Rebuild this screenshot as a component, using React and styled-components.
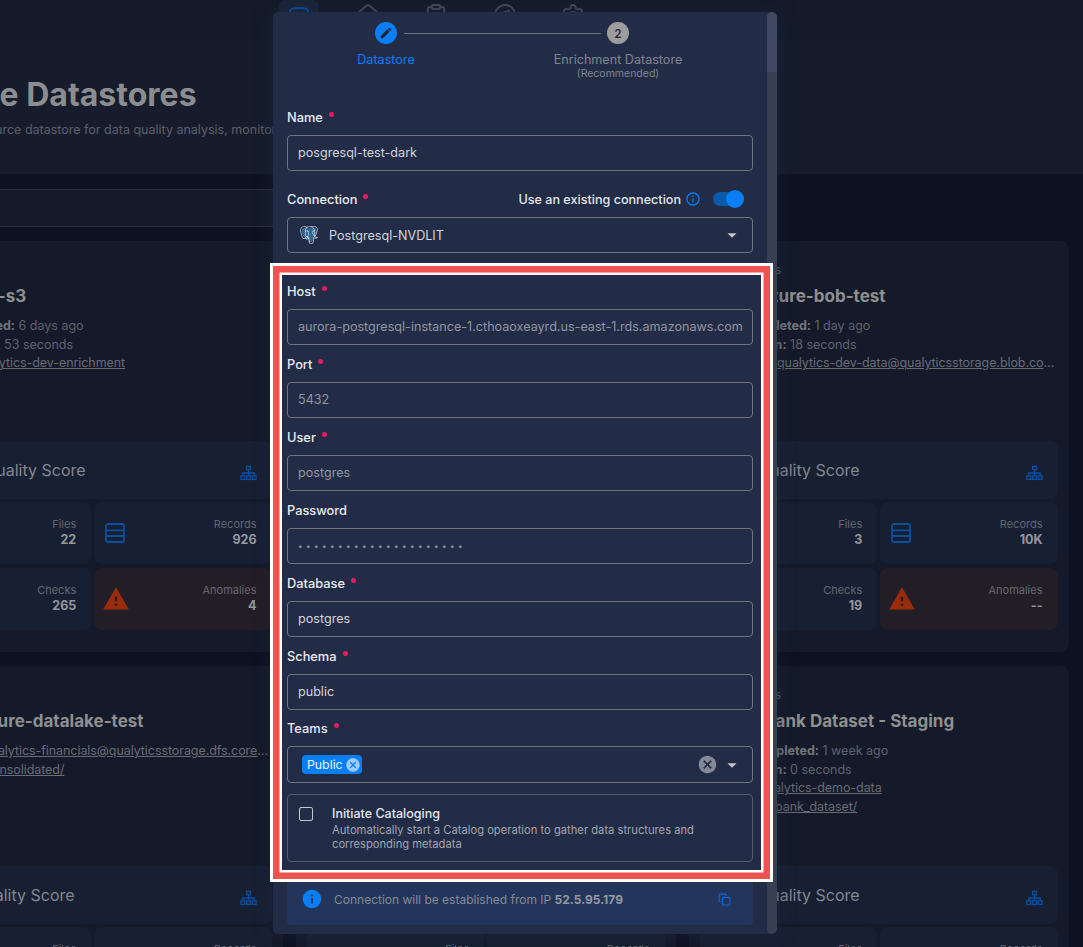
import React from "react";
import styled, { createGlobalStyle } from "styled-components";
import { Database, Home, ClipboardList, Compass, Settings, Copy } from "lucide-react";
import { MdEdit, MdArrowDropDown, MdCancel, MdInfo, MdInfoOutline, MdWarning } from "react-icons/md";
import { SiPostgresql } from "react-icons/si";

const Global = createGlobalStyle`
  html, body { margin: 0; padding: 0; background: #0e1321; }
  body { font-family: Inter, "Noto Sans", "Liberation Sans", sans-serif; }
  * { box-sizing: border-box; }
`;

const Page = styled.div`
  position: relative;
  width: 1083px;
  height: 947px;
  overflow: hidden;
  background: #0d1221;
`;
const TopBand = styled.header`
  height: 174px;
  background: #161c2b;
`;
const Nav = styled.nav`
  height: 40px;
  background: #141a29;
  display: flex;
  gap: 28.5px;
  padding-left: 279px;
`;
const NavItem = styled.div`
  width: 40px;
  height: 40px;
  display: flex;
  justify-content: center;
  padding-top: ${(p) => (p.$active ? "6px" : "3px")};
  border-radius: 6px;
  color: ${(p) => (p.$active ? "#0b4f9f" : "#474c59")};
  background: ${(p) => (p.$active ? "#1a2438" : "transparent")};
`;
const TitleBlock = styled.div`
  margin-left: -92px;
  padding-top: 35px;
`;
const Title = styled.h1`
  margin: 0;
  font-size: 32px;
  line-height: 40px;
  font-weight: 700;
  color: #8c8d90;
  white-space: nowrap;
`;
const Subtitle = styled.p`
  margin: 7px 0 0 9px;
  font-size: 12.5px;
  line-height: 16px;
  color: #5c606a;
  white-space: nowrap;
`;
const Toolbar = styled.div`
  height: 67px;
  padding-top: 15px;
`;
const SearchBox = styled.div`
  width: 500px;
  height: 38px;
  background: #141a29;
  border-top: 1px solid #2a3142;
  border-bottom: 1px solid #2a3142;
  margin-left: -97px;
`;
const Grid = styled.main`
  display: grid;
  grid-template-columns: repeat(3, 379.5px);
  column-gap: 13.5px;
  row-gap: 14px;
  margin-left: -97px;
`;
const Card = styled.article`
  background: #141a29;
  border-radius: 8px;
  padding: 0 11px 22px;
  height: 411px;
`;
const Info = styled.div`
  height: 200px;
  padding-top: 22px;
  overflow: hidden;
`;
const Tag = styled.div`
  font-size: 11px;
  line-height: 14px;
  color: #5c606a;
  padding-left: ${(p) => p.$shift ?? 25}px;
`;
const CardTitle = styled.h2`
  margin: 7px 0 0;
  padding-left: ${(p) => p.$shift}px;
  font-size: 17px;
  line-height: 24px;
  font-weight: 700;
  color: #908f90;
  white-space: nowrap;
`;
const Meta = styled.div`
  margin-top: ${(p) => (p.$first ? "9px" : "0")};
  width: 354px;
  padding-left: ${(p) => p.$shift ?? 30}px;
  font-size: 12.5px;
  line-height: 18.7px;
  color: #5f636d;
  white-space: nowrap;
  overflow: hidden;
  text-overflow: ellipsis;
  b { font-weight: 700; color: #74767c; }
`;
const MetaLink = styled(Meta)`
  width: 357px;
  letter-spacing: -0.07px;
  text-decoration: underline;
  color: #696c75;
`;
const ScoreTile = styled.div`
  height: 58px;
  border-radius: 8px;
  background: #172033;
  display: flex;
  align-items: center;
  justify-content: space-between;
  padding: 0 15px 0 ${(p) => p.$indent}px;
  font-size: 16px;
  color: #84878e;
  white-space: nowrap;
`;
const SitemapIcon = styled.svg`
  width: 17px;
  height: 16px;
  margin-top: 5px;
  color: #0b4f9f;
`;
const TileGrid = styled.div`
  margin-top: 3px;
  display: grid;
  grid-template-columns: 1fr 1fr;
  grid-auto-rows: 62px;
  column-gap: 3px;
  row-gap: 4px;
`;
const Tile = styled.div`
  border-radius: 8px;
  background: ${(p) => (p.$alert ? "#231d26" : "#172033")};
  display: flex;
  align-items: center;
  justify-content: space-between;
  padding: 0 15px 2px ${(p) => (p.$alert ? "8px" : "11px")};
`;
const TileIcon = styled.div`
  display: flex;
  margin-top: 2px;
  color: ${(p) => (p.$alert ? "#9a2c0c" : "#0b4f9f")};
`;
const TileText = styled.div`
  text-align: right;
`;
const TileLabel = styled.div`
  font-size: 11px;
  line-height: 15px;
  color: #63666f;
`;
const TileValue = styled.div`
  font-size: 12.5px;
  line-height: 16px;
  font-weight: 700;
  color: #96979b;
`;

const Modal = styled.section`
  position: absolute;
  left: 273px;
  top: 12px;
  width: 504px;
  height: 922px;
  background: #222c47;
  border-radius: 5px;
  display: flex;
  overflow: hidden;
  box-shadow: 0 0 18px rgba(30, 40, 70, 0.55);
`;
const ModalBody = styled.div`
  width: 494px;
  padding: 0 14px;
`;
const Scrollbar = styled.div`
  width: 10px;
  border-radius: 5px;
  background: #393f52;
  overflow: hidden;
`;
const ScrollThumb = styled.div`
  height: 60px;
  background: #3f4964;
`;
const Stepper = styled.div`
  position: relative;
  height: 81px;
  display: grid;
  grid-template-columns: 198px 232px;
  justify-content: start;
`;
const Step = styled.div`
  display: flex;
  flex-direction: column;
  align-items: center;
  grid-column: ${(p) => p.$col};
  padding-top: 10px;
  width: ${(p) => p.$w}px;
  margin-left: ${(p) => p.$ml}px;
`;
const StepDot = styled.div`
  width: 22px;
  height: 22px;
  border-radius: 50%;
  display: flex;
  align-items: center;
  justify-content: center;
  font-size: 12px;
  font-weight: 500;
  color: #1c2233;
  background: ${(p) => (p.$active ? "#0a7ff5" : "#9d9d9d")};
`;
const StepLine = styled.div`
  position: absolute;
  left: 117px;
  top: 21px;
  width: 197px;
  height: 1px;
  background: #6e7483;
`;
const StepName = styled.div`
  margin-top: 8px;
  font-size: 12.6px;
  line-height: 15px;
  color: ${(p) => (p.$active ? "#0a7ff5" : "#80848f")};
  white-space: nowrap;
`;
const StepNote = styled.div`
  font-size: 10.5px;
  line-height: 13px;
  color: #80848f;
  white-space: nowrap;
`;
const Field = styled.div`
  padding-top: ${(p) => p.$top ?? 9}px;
`;
const LabelRow = styled.div`
  height: 20px;
  margin-bottom: 8px;
  display: flex;
  align-items: center;
  justify-content: space-between;
  padding-right: 10px;
`;
const Label = styled.label`
  display: inline-flex;
  align-items: center;
  font-size: 12.8px;
  font-weight: 500;
  color: #e9ebee;
`;
const Dot = styled.span`
  width: 5px;
  height: 5px;
  border-radius: 50%;
  background: #ea1a62;
  margin: 0 0 5px 6px;
`;
const Input = styled.div`
  height: 36px;
  border: 1px solid #70747f;
  border-radius: 4px;
  display: flex;
  align-items: center;
  padding: 0 10px 1px;
  font-size: 12.6px;
  color: ${(p) => (p.$muted ? "#9296a1" : "#d3d5da")};
  white-space: nowrap;
  overflow: hidden;
`;
const PasswordDots = styled.span`
  font-size: 8px;
  letter-spacing: 3.5px;
`;
const SelectBox = styled(Input)`
  justify-content: space-between;
  padding: 0 9px 0 12px;
`;
const TeamsBox = styled(SelectBox)`
  height: 37px;
  padding: 0 9px 0 14px;
`;
const SelectValue = styled.div`
  display: flex;
  align-items: center;
  gap: 11px;
`;
const ToggleWrap = styled.div`
  display: flex;
  align-items: center;
  gap: 4px;
  font-size: 12.6px;
  font-weight: 500;
  color: #e4e6ea;
`;
const InfoIcon = styled.span`
  display: flex;
  color: #0a7ff5;
`;
const Toggle = styled.div`
  position: relative;
  width: 30px;
  height: 14px;
  margin-left: 8px;
  border-radius: 7px;
  background: #0c5bab;
`;
const Thumb = styled.div`
  position: absolute;
  right: -1px;
  top: -2px;
  width: 18px;
  height: 18px;
  border-radius: 50%;
  background: #0a7ff5;
`;
const Chip = styled.div`
  display: flex;
  align-items: center;
  height: 19px;
  padding: 0 1px 0 5px;
  gap: 2px;
  background: #0a7ff5;
  border-radius: 4px;
  font-size: 12.3px;
  color: #eaf4ff;
`;
const ChipClose = styled.span`
  display: flex;
  color: #9ccbff;
`;
const Actions = styled.div`
  display: flex;
  align-items: center;
  gap: 3px;
  color: #c4c6cc;
`;
const ClearIcon = styled.span`
  display: flex;
  color: #858997;
`;
const CatalogBox = styled.div`
  margin-top: 11px;
  height: 68px;
  border: 1px solid #555b6c;
  border-radius: 4px;
  display: flex;
  padding: 11px 30px 0 11px;
`;
const Checkbox = styled.div`
  width: 14px;
  height: 14px;
  flex: none;
  border: 1px solid #c4c6cb;
  border-radius: 2px;
  margin: 1px 19px 0 0;
`;
const CatalogTitle = styled.div`
  font-size: 12.5px;
  line-height: 15px;
  font-weight: 500;
  color: #e4e6ea;
`;
const CatalogDesc = styled.div`
  margin-top: 2px;
  font-size: 11.2px;
  line-height: 14px;
  color: #a1a5af;
`;
const Notice = styled.div`
  margin-top: 11px;
  height: 52px;
  border-radius: 4px;
  background: #23355a;
  display: flex;
  align-items: center;
  padding: 0 22px 0 14px;
  font-size: 12px;
  color: #858a97;
  b { font-weight: 700; color: #9498a4; }
`;
const NoticeText = styled.div`
  flex: 1;
  margin-left: 11px;
`;
const CopyIcon = styled.span`
  display: flex;
  color: #0a6adb;
`;
const Frame = styled.div`
  position: absolute;
  left: 269.5px;
  top: 262.5px;
  width: 503.5px;
  height: 619px;
  border: 3px solid #fff;
  box-shadow: inset 0 0 0 6.5px #ef5350, inset 0 0 0 9px #fff;
  pointer-events: none;
`;
const LogoBox = styled.span`
  position: relative;
  width: 18px;
  height: 18px;
  display: block;
  color: #e6edf5;
`;
const LogoFill = styled.svg`
  position: absolute;
  inset: 0;
`;
const LogoLine = styled(SiPostgresql)`
  position: absolute;
  inset: 0;
`;

const Sitemap = () => (
  <SitemapIcon viewBox="0 0 18 16" fill="none" stroke="currentColor" strokeWidth="1.4">
    <rect x="7" y="1" width="4" height="3.5" />
    <rect x="1" y="11" width="4" height="3.8" />
    <rect x="7" y="11" width="4" height="3.8" />
    <rect x="13" y="11" width="4" height="3.8" />
    <path d="M9 4.5V11M3 11V8h12v3" />
  </SitemapIcon>
);
const RowsIcon = () => (
  <svg width="20" height="20" viewBox="0 0 20 20" fill="none" stroke="currentColor" strokeWidth="1.8">
    <rect x="1" y="1" width="18" height="18" rx="2" />
    <path d="M1 7.3h18M1 13h18" />
  </svg>
);

const Stats = ({ data }) => (
  <TileGrid>
    <Tile>
      <TileIcon><RowsIcon /></TileIcon>
      <TileText><TileLabel>Files</TileLabel><TileValue>{data.files}</TileValue></TileText>
    </Tile>
    <Tile>
      <TileIcon><RowsIcon /></TileIcon>
      <TileText><TileLabel>Records</TileLabel><TileValue>{data.records}</TileValue></TileText>
    </Tile>
    <Tile>
      <TileIcon><RowsIcon /></TileIcon>
      <TileText><TileLabel>Checks</TileLabel><TileValue>{data.checks}</TileValue></TileText>
    </Tile>
    <Tile $alert>
      <TileIcon $alert><MdWarning size={28} /></TileIcon>
      <TileText><TileLabel>Anomalies</TileLabel><TileValue>{data.anomalies}</TileValue></TileText>
    </Tile>
  </TileGrid>
);

const cards = [
  { title: "qualytics-s3", titleShift: 7, scoreIndent: 70, completed: "6 days ago", duration: "53 seconds", completedShift: 30,
    links: [{ text: "qualytics-dev-enrichment", shift: 60 }], files: 22, records: 926, checks: 265, anomalies: 4 },
  { title: "", titleShift: 0, scoreIndent: 60, files: 5, records: "1K", checks: 30, anomalies: 2, links: [] },
  { tag: "Datastores", title: "dev-azure-bob-test", titleShift: 21, scoreIndent: 58, completed: "1 day ago", duration: "18 seconds", completedShift: 40,
    links: [{ text: "qualytics-dev-data@qualyticsstorage.blob.core.windows.net", shift: 77 }], files: 3, records: "10K", checks: 19, anomalies: "--" },
  { title: "dev-azure-datalake-test", titleShift: 26, scoreIndent: 59,
    links: [{ text: "qualytics-financials@qualyticsstorage.dfs.core.windows.net", shift: 69 }, { text: "consolidated/", shift: 71 }], files: 8, records: "2K", checks: 40, anomalies: 0 },
  { title: "", titleShift: 0, scoreIndent: 60, files: 5, records: "1K", checks: 30, anomalies: 2, links: [] },
  { tag: "Datastores", title: "Demo Bank Dataset - Staging", titleShift: 12, scoreIndent: 58, completed: "1 week ago", duration: "0 seconds", completedShift: 48,
    links: [{ text: "qualytics-demo-data", shift: 59 }, { text: "bank_dataset/", shift: 75 }], files: 5, records: "1K", checks: 30, anomalies: 2 },
];

const fields = [
  { label: "Host", value: "aurora-postgresql-instance-1.cthoaoxeayrd.us-east-1.rds.amazonaws.com", required: true, muted: true, top: 28 },
  { label: "Port", value: "5432", required: true, muted: true },
  { label: "User", value: "postgres", required: true, muted: true },
  { label: "Password", value: <PasswordDots>•••••••••••••••••••••</PasswordDots>, muted: true },
  { label: "Database", value: "postgres", required: true },
  { label: "Schema", value: "public", required: true },
];

const PgLogo = () => (
  <LogoBox>
    <LogoFill viewBox="0 0 24 24" width="18" height="18">
      <path d="M2 5c2-4 8-4 10-2 3-2 9-2 10 2 1 5-3 7-4 9 0 3-1 8-4 8-2 0-3-2-3-5-3 1-6-2-7-4S1 8 2 5z" fill="#336791" />
    </LogoFill>
    <LogoLine size={18} />
  </LogoBox>
);

export default function App() {
  return (
    <Page>
      <Global />
      <TopBand>
        <Nav>
          <NavItem $active><Database size={24} /></NavItem>
          <NavItem><Home size={24} /></NavItem>
          <NavItem><ClipboardList size={24} /></NavItem>
          <NavItem><Compass size={24} /></NavItem>
          <NavItem><Settings size={24} /></NavItem>
        </Nav>
        <TitleBlock>
          <Title>Source Datastores</Title>
          <Subtitle>Connect a source datastore for data quality analysis, monitoring and enrichment</Subtitle>
        </TitleBlock>
      </TopBand>
      <Toolbar><SearchBox /></Toolbar>
      <Grid>
        {cards.map((c, i) => (
          <Card key={i}>
            <Info>
              <Tag>{c.tag || "\u00a0"}</Tag>
              <CardTitle $shift={c.titleShift}>{c.title || "\u00a0"}</CardTitle>
              {c.completed && <Meta $first $shift={c.completedShift}><b>Completed:</b> {c.completed}</Meta>}
              {c.duration && <Meta><b>Duration:</b> {c.duration}</Meta>}
              {c.links.map((l, k) => (
                <MetaLink key={l.text} $shift={l.shift} $first={k === 0 && !c.completed}>{l.text}</MetaLink>
              ))}
            </Info>
            <ScoreTile $indent={c.scoreIndent}>
              <span>Quality Score</span>
              <Sitemap />
            </ScoreTile>
            <Stats data={c} />
          </Card>
        ))}
      </Grid>

      <Modal>
        <ModalBody>
          <Stepper>
            <Step $col={1} $w={100} $ml={49}>
              <StepDot $active><MdEdit size={14} /></StepDot>
              <StepName $active>Datastore</StepName>
            </Step>
            <Step $col={2} $w={160} $ml={53}>
              <StepDot>2</StepDot>
              <StepName>Enrichment Datastore</StepName>
              <StepNote>(Recommended)</StepNote>
            </Step>
            <StepLine />
          </Stepper>
          <Field $top={14}>
            <LabelRow><Label>Name<Dot /></Label></LabelRow>
            <Input>posgresql-test-dark</Input>
          </Field>
          <Field $top={18}>
            <LabelRow>
              <Label>Connection<Dot /></Label>
              <ToggleWrap>
                Use an existing connection
                <InfoIcon><MdInfoOutline size={16} /></InfoIcon>
                <Toggle><Thumb /></Toggle>
              </ToggleWrap>
            </LabelRow>
            <SelectBox>
              <SelectValue><PgLogo />Postgresql-NVDLIT</SelectValue>
              <Actions><MdArrowDropDown size={22} /></Actions>
            </SelectBox>
          </Field>
          {fields.map((f) => (
            <Field key={f.label} $top={f.top}>
              <LabelRow>
                <Label>{f.label}{f.required && <Dot />}</Label>
              </LabelRow>
              <Input $muted={f.muted}>{f.value}</Input>
            </Field>
          ))}
          <Field $top={8}>
            <LabelRow><Label>Teams<Dot /></Label></LabelRow>
            <TeamsBox>
              <Chip>Public<ChipClose><MdCancel size={16} /></ChipClose></Chip>
              <Actions>
                <ClearIcon><MdCancel size={21} /></ClearIcon>
                <MdArrowDropDown size={22} />
              </Actions>
            </TeamsBox>
          </Field>
          <CatalogBox>
            <Checkbox />
            <div>
              <CatalogTitle>Initiate Cataloging</CatalogTitle>
              <CatalogDesc>Automatically start a Catalog operation to gather data structures and corresponding metadata</CatalogDesc>
            </div>
          </CatalogBox>
          <Notice>
            <InfoIcon><MdInfo size={22} /></InfoIcon>
            <NoticeText>Connection will be established from IP <b>52.5.95.179</b></NoticeText>
            <CopyIcon><Copy size={13} /></CopyIcon>
          </Notice>
        </ModalBody>
        <Scrollbar><ScrollThumb /></Scrollbar>
      </Modal>
      <Frame />
    </Page>
  );
}
